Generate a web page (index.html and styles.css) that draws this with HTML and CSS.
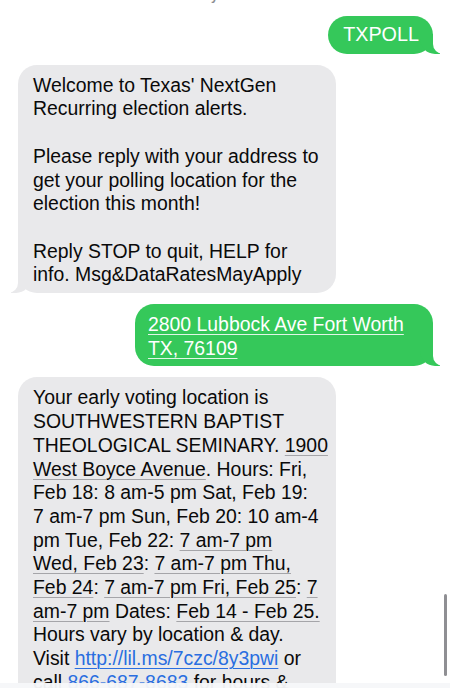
FILE: index.html
```html
<!DOCTYPE html>
<html lang="en">
<head>
    <meta charset="UTF-8">
    <meta name="viewport" content="width=device-width, initial-scale=1.0">
    <title>Messages</title>
    <link rel="stylesheet" href="styles.css">
</head>
<body>
    <div class="screen">
        <div class="stamp"><b>Today</b> 5:40 PM</div>

        <div class="thread">
            <div class="msg out short">TXPOLL</div>

            <div class="msg in">
                Welcome to Texas' NextGen<br>
                Recurring election alerts.<br>
                <br>
                Please reply with your address to<br>
                get your polling location for the<br>
                election this month!<br>
                <br>
                Reply STOP to quit, HELP for<br>
                info. Msg&amp;DataRatesMayApply
            </div>

            <div class="msg out">
                <span class="dl">2800 Lubbock Ave Fort Worth</span><br>
                <span class="dl">TX, 76109</span>
            </div>

            <div class="msg in">
                Your early voting location is<br>
                SOUTHWESTERN BAPTIST<br>
                THEOLOGICAL SEMINARY. <span class="dl">1900</span><br>
                <span class="dl">West Boyce Avenue</span>. Hours: Fri,<br>
                Feb 18: 8 am-5 pm Sat, Feb 19:<br>
                7 am-7 pm Sun, Feb 20: 10 am-4<br>
                pm Tue, Feb 22: <span class="dl">7 am-7 pm</span><br>
                <span class="dl">Wed, Feb 23</span>: <span class="dl">7 am-7 pm Thu,</span><br>
                <span class="dl">Feb 24</span>: <span class="dl">7 am-7 pm Fri, Feb 25</span>: <span class="dl">7</span><br>
                <span class="dl">am-7 pm</span> Dates: <span class="dl">Feb 14 - Feb 25.</span><br>
                Hours vary by location &amp; day.<br>
                Visit <a class="link" href="#">http://lil.ms/7czc/8y3pwi</a> or<br>
                call <a class="link" href="#">866-687-8683</a> for hours &amp;<br>
                more info.
            </div>
        </div>

        <div class="scrollbar"></div>
        <div class="bottom-bar"></div>
    </div>
</body>
</html>
```

FILE: styles.css
```css
body {
    margin: 0;
    background: #fff;
    font-family: "Liberation Sans", Arial, sans-serif;
}
.screen {
    position: relative;
    width: 450px;
    height: 688px;
    overflow: hidden;
    background: #fff;
}
.stamp {
    margin-top: -11px;
    height: 14px;
    text-align: center;
    font-size: 12.5px;
    line-height: 14px;
    color: #8e8e93;
}
.thread {
    display: flex;
    flex-direction: column;
    gap: 11px;
    padding: 13px 17px 0 18px;
}
.msg {
    position: relative;
    font-size: 19.4px;
    line-height: 23.7px;
    padding: 9px 14px 6px 15px;
    border-radius: 19px;
    white-space: nowrap;
}
.msg.in {
    align-self: flex-start;
    width: 289px;
    background: #e9e9eb;
    color: #0a0a0a;
}
.msg.out {
    align-self: flex-end;
    width: 271px;
    padding-left: 13px;
    background: #35c85a;
    color: #fff;
}
.msg.short {
    width: auto;
    padding: 7px 14px 7px 15px;
    font-size: 19.8px;
}
/* bubble tails */
.msg::before,
.msg::after {
    content: "";
    position: absolute;
    bottom: 0;
    height: 20px;
}
.msg.in::before {
    left: -7px;
    width: 20px;
    background: #e9e9eb;
    border-bottom-right-radius: 15px;
}
.msg.in::after {
    left: -10px;
    width: 10px;
    background: #fff;
    border-bottom-right-radius: 10px;
}
.msg.out::before {
    right: -7px;
    width: 20px;
    background: #35c85a;
    border-bottom-left-radius: 15px;
}
.msg.out::after {
    right: -10px;
    width: 10px;
    background: #fff;
    border-bottom-left-radius: 10px;
}
.dl {
    text-decoration: underline;
    text-decoration-color: #a5a5a9;
    text-decoration-thickness: 1px;
    text-underline-offset: 3px;
}
.msg.out .dl {
    text-decoration-color: rgba(255, 255, 255, 0.85);
}
.link {
    color: #2a6ee0;
    text-decoration: underline;
    text-decoration-thickness: 1px;
    text-underline-offset: 3px;
}
.scrollbar {
    position: absolute;
    right: 3px;
    top: 594px;
    width: 3px;
    height: 82px;
    border-radius: 2px;
    background: #8f8f93;
}
.bottom-bar {
    position: absolute;
    left: 0;
    right: 0;
    bottom: 0;
    height: 5px;
    background: rgba(246, 247, 249, 0.96);
}
```
